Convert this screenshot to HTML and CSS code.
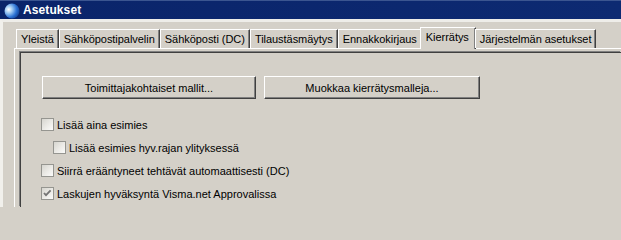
FILE: index.html
```html
<!DOCTYPE html>
<html lang="fi">
<head>
<meta charset="utf-8">
<title>Asetukset</title>
<link rel="stylesheet" href="styles.css">
</head>
<body>
<div class="window">
  <div class="titlebar">
    <svg class="app-icon" width="16" height="16" viewBox="0 0 16 16">
      <defs>
        <radialGradient id="sphere" cx="0.28" cy="0.4" r="0.8">
          <stop offset="0" stop-color="#ffffff"/>
          <stop offset="0.3" stop-color="#9cc8f2"/>
          <stop offset="0.65" stop-color="#2c72d4"/>
          <stop offset="1" stop-color="#0c3686"/>
        </radialGradient>
      </defs>
      <circle cx="8" cy="8" r="7.5" fill="url(#sphere)"/>
    </svg>
    <span class="title">Asetukset</span>
  </div>
  <div class="client">
    <div class="tabs">
      <div class="tab">Yleistä</div>
      <div class="tab">Sähköpostipalvelin</div>
      <div class="tab">Sähköposti (DC)</div>
      <div class="tab">Tilaustäsmäytys</div>
      <div class="tab">Ennakkokirjaus</div>
      <div class="tab tab-active">Kierrätys</div>
      <div class="tab">Järjestelmän asetukset</div>
    </div>
    <div class="sheet">
      <div class="frame">
        <div class="buttons">
          <button class="btn btn-suppliers">Toimittajakohtaiset mallit...</button>
          <button class="btn btn-edit">Muokkaa kierrätysmalleja...</button>
        </div>
        <div class="options">
          <label class="option"><span class="box"></span>Lisää aina esimies</label>
          <label class="option option-nested"><span class="box"></span>Lisää esimies hyv.rajan ylityksessä</label>
          <label class="option"><span class="box"></span>Siirrä erääntyneet tehtävät automaattisesti (DC)</label>
          <label class="option"><span class="box box-checked"><svg width="11" height="11" viewBox="0 0 11 11"><path d="M2 5 L4 7.2 L8.6 2.4" fill="none" stroke="#747474" stroke-width="1.8"/></svg></span>Laskujen hyväksyntä Visma.net Approvalissa</label>
        </div>
      </div>
    </div>
  </div>
</div>
</body>
</html>
```

FILE: styles.css
```css
html, body {
  margin: 0;
  padding: 0;
}

html {
  background: #d4d0c8;
}

body {
  width: 621px;
  height: 207px;
  overflow: hidden;
  background: #d4d0c8;
  font-family: "Liberation Sans", Arial, sans-serif;
  font-size: 11px;
  color: #000;
}

.window {
  display: flex;
  flex-direction: column;
  height: 207px;
}

.titlebar {
  height: 19px;
  display: flex;
  align-items: center;
  gap: 3px;
  padding-left: 4px;
  background: linear-gradient(to right, #0a246a, #0d2a72);
  box-shadow: inset 0 1px 0 #3b5590;
}

.app-icon {
  display: block;
  margin-top: 2px;
}

.title {
  color: #fff;
  font-weight: bold;
  font-size: 12px;
  letter-spacing: 0.1px;
}

.client {
  flex: 1;
  border-top: 3px solid #eeede9;
  border-left: 3px solid #f1f0ec;
  display: flex;
  flex-direction: column;
}

.tabs {
  display: flex;
  align-items: flex-end;
  padding: 5px 0 0 13px;
  height: 21px;
  position: relative;
  z-index: 1;
}

.tab {
  height: 18px;
  line-height: 19px;
  padding: 0 4px;
  border-top: 1px solid #fff;
  border-left: 1px solid #fff;
  border-right: 1px solid #404040;
  box-shadow: inset -1px 0 0 #808080;
  white-space: nowrap;
  letter-spacing: -0.04px;
}

.tab-active {
  height: 21px;
  line-height: 19px;
  margin: 0 -1px -1px -2px;
  padding: 0 6px 0 5px;
  background: #d4d0c8;
}

.sheet {
  flex: 1;
  margin-left: 11px;
  border-top: 1px solid #fff;
  border-left: 1px solid #fff;
  padding: 3px 0 0 5px;
  display: flex;
}

.frame {
  flex: 1;
  border-top: 1px solid #404040;
  border-left: 1px solid #404040;
  box-shadow: -1px -1px 0 #808080;
}

.buttons {
  display: flex;
  gap: 8px;
  padding: 23px 0 0 21px;
}

.btn {
  height: 23px;
  margin: 0;
  padding: 0;
  font-family: inherit;
  font-size: 11px;
  color: #000;
  background: #d4d0c8;
  border: 1px solid;
  border-color: #fff #404040 #404040 #fff;
  box-shadow: inset -1px -1px 0 #808080;
  border-radius: 0;
}

.btn-suppliers {
  width: 214px;
}

.btn-edit {
  width: 216px;
}

.options {
  display: flex;
  flex-direction: column;
  padding: 14px 0 0 20px;
}

.option {
  display: flex;
  align-items: center;
  height: 23px;
  gap: 3px;
  white-space: nowrap;
}

.option-nested {
  margin-left: 12px;
}

.box {
  width: 11px;
  height: 11px;
  border: 1px solid #959590;
  background: linear-gradient(135deg, #d6d5cf 0%, #ecebe7 55%, #fbfbfa 100%);
  display: flex;
  align-items: center;
  justify-content: center;
}

.box svg {
  display: block;
}
```
